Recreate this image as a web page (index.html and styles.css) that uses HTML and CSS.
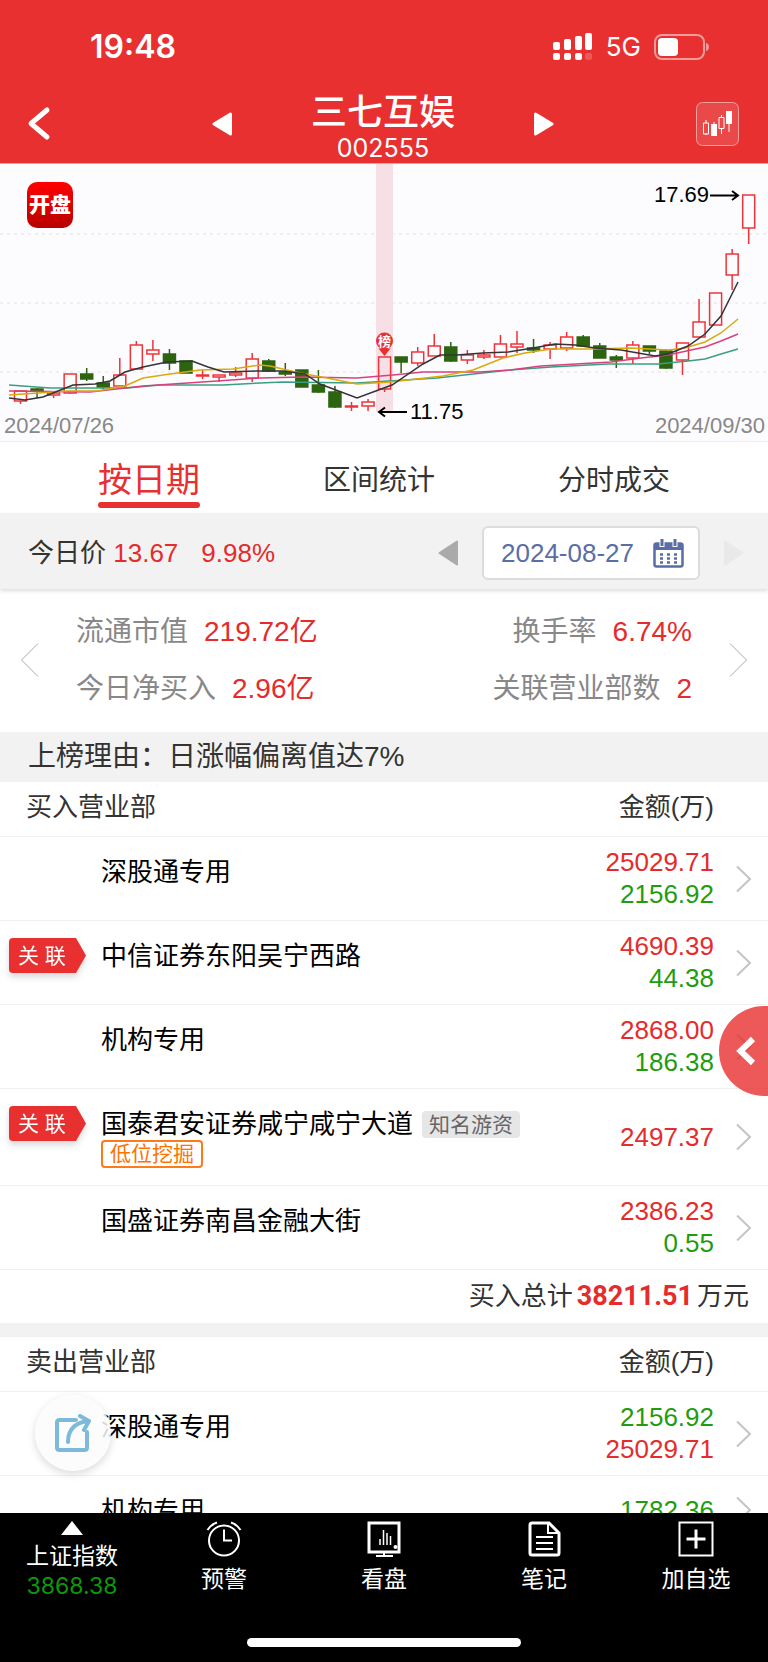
FILE: index.html
```html
<!DOCTYPE html>
<html lang="zh-CN">
<head>
    <meta charset="UTF-8">
    <meta name="viewport" content="width=device-width, initial-scale=1.0">
    <title>三七互娱 002555</title>
    <link rel="stylesheet" href="styles.css">
</head>
<body>
    <header class="header">
        <div class="status-bar">
            <span class="status-time">19:48</span>
            <div class="status-right">
                <svg width="40" height="28" viewBox="0 0 40 28" fill="#fff">
                    <rect x="0" y="9" width="7" height="8" rx="2"/>
                    <rect x="11" y="6" width="7" height="11" rx="2"/>
                    <rect x="22" y="3" width="7" height="14" rx="2"/>
                    <rect x="32" y="0" width="7" height="17" rx="2"/>
                    <rect x="0" y="20" width="7" height="7" rx="2"/>
                    <rect x="11" y="20" width="7" height="7" rx="2"/>
                    <rect x="22" y="20" width="7" height="7" rx="2"/>
                    <rect x="32" y="20" width="7" height="7" rx="2" opacity="0.2"/>
                </svg>
                <span class="status-net">5G</span>
                <svg width="56" height="26" viewBox="0 0 56 26">
                    <rect x="1" y="1" width="49" height="24" rx="7" fill="none" stroke="#f39a9a" stroke-width="2"/>
                    <rect x="4" y="4" width="20" height="18" rx="4" fill="#fff"/>
                    <path d="M52 9c4 1 4 7 0 8z" fill="#f39a9a"/>
                </svg>
            </div>
        </div>
        <nav class="title-bar">
            <button class="icon-btn" aria-label="返回">
                <svg width="24" height="36" viewBox="0 0 24 36"><path d="M20 4L4 17.500L20 31" fill="none" stroke="#fff" stroke-width="5" stroke-linecap="round" stroke-linejoin="round"/></svg>
            </button>
            <div class="stock">
                <button class="icon-btn" aria-label="上一只">
                    <svg width="20" height="24" viewBox="0 0 20 24"><path d="M18.500 2v20L2 12z" fill="#fff" stroke="#fff" stroke-width="3" stroke-linejoin="round"/></svg>
                </button>
                <div class="stock-name">
                    <h1>三七互娱</h1>
                    <p>002555</p>
                </div>
                <button class="icon-btn" aria-label="下一只">
                    <svg width="20" height="24" viewBox="0 0 20 24"><path d="M1.500 2v20L18 12z" fill="#fff" stroke="#fff" stroke-width="3" stroke-linejoin="round"/></svg>
                </button>
            </div>
            <button class="icon-btn" aria-label="K线图">
                <svg width="43" height="44" viewBox="0 0 43 44">
                    <rect x="0.500" y="0.500" width="42" height="43" rx="6" fill="#fff" fill-opacity="0.12" stroke="#f3a0a0"/>
                    <path d="M10 18v3M10 31v2M25.500 13v2M25.500 27v5M18 20v3M33 22v8" stroke="#fff" stroke-width="1"/>
                    <path d="M7.500 21h5v11h-5zM23 15.500h5v11h-5z" fill="none" stroke="#fff"/>
                    <path d="M15 22h6v12h-6zM30 9h6v13h-6z" fill="#fff"/>
                </svg>
            </button>
        </nav>
    </header>

    <main class="content">
        <div class="chart">
            <svg id="kline" viewBox="0 0 768 277">
                <path class="grid-line" d="M0 70H768M0 139H768M0 208H768"/>
                <rect class="cursor-band" x="376" y="0" width="17" height="248"/>
                <g id="candles"></g>
                <g id="averages"></g>
                <path d="M378.500 184.500L384.500 192L390.500 184.500z" fill="#e93030"/>
                <circle cx="384.500" cy="177" r="8.500" fill="#e93030"/>
                <text class="mark-text" x="384.500" y="182" text-anchor="middle">榜</text>
                <path class="arrow" d="M407 248H379M385 243.500L379 248L385 252.500"/>
                <text class="price-text" x="410" y="255">11.75</text>
                <path class="arrow" d="M710 31.500H738M732 27L738 31.500L732 36"/>
                <text class="price-text" x="709" y="38" text-anchor="end">17.69</text>
                <text class="date-text" x="4" y="269">2024/07/26</text>
                <text class="date-text" x="765" y="269" text-anchor="end">2024/09/30</text>
            </svg>
            <span class="app-logo">开盘</span>
        </div>

        <div class="tabs" role="tablist">
            <button class="tab active" role="tab" aria-selected="true">按日期</button>
            <button class="tab" role="tab">区间统计</button>
            <button class="tab" role="tab">分时成交</button>
        </div>

        <div class="price-bar">
            <div class="price">今日价 <span class="red">13.67</span><span class="red change">9.98%</span></div>
            <div class="date-picker">
                <button class="icon-btn" aria-label="前一天">
                    <svg width="20" height="26" viewBox="0 0 20 26"><path d="M19 1.500v23L1.500 13z" fill="#aaa" stroke="#aaa" stroke-width="2" stroke-linejoin="round"/></svg>
                </button>
                <label class="date-box">
                    <input type="text" value="2024-08-27" aria-label="日期" readonly>
                    <svg width="31" height="29" viewBox="0 0 31 29">
                        <rect x="1.500" y="4.500" width="28" height="23" rx="2" fill="#fff" stroke="#5a6da6" stroke-width="2.500"/>
                        <path d="M1 4h29v7H1z" fill="#5a6da6"/>
                        <path d="M9 0v8M22 0v8" stroke="#fff" stroke-width="5"/>
                        <path d="M9 0v7M22 0v7" stroke="#5a6da6" stroke-width="3"/>
                        <path d="M7 15.500h17M7 19.500h17M7 23.500h17" stroke="#5a6da6" stroke-width="2.500" stroke-dasharray="3 4"/>
                    </svg>
                </label>
                <button class="icon-btn" aria-label="后一天" disabled>
                    <svg width="20" height="26" viewBox="0 0 20 26"><path d="M1 1.500v23L18.500 13z" fill="#e9e9e9" stroke="#e9e9e9" stroke-width="2" stroke-linejoin="round"/></svg>
                </button>
            </div>
        </div>

        <section class="summary">
            <button class="icon-btn" aria-label="上一页">
                <svg width="18" height="34" viewBox="0 0 18 34"><path d="M17 0.500L0.500 17L17 33.500" fill="none" stroke="#aaa"/></svg>
            </button>
            <div class="summary-cols">
                <dl>
                    <div><dt>流通市值</dt><dd>219.72亿</dd></div>
                    <div><dt>今日净买入</dt><dd>2.96亿</dd></div>
                </dl>
                <dl class="right">
                    <div><dt>换手率</dt><dd>6.74%</dd></div>
                    <div><dt>关联营业部数</dt><dd>2</dd></div>
                </dl>
            </div>
            <button class="icon-btn" aria-label="下一页">
                <svg width="18" height="34" viewBox="0 0 18 34"><path d="M1 0.500L17.500 17L1 33.500" fill="none" stroke="#aaa"/></svg>
            </button>
        </section>

        <p class="reason">上榜理由：日涨幅偏离值达7%</p>

        <table class="branches">
            <thead>
                <tr><th class="side" colspan="2">买入营业部</th><th class="amount">金额(万)</th><th class="more"></th></tr>
            </thead>
            <tbody>
                <tr>
                    <td class="mark"></td>
                    <td class="name"><div class="name-line">深股通专用</div></td>
                    <td class="amount"><div class="red">25029.71</div><div class="green">2156.92</div></td>
                    <td class="more"><a href="#" aria-label="详情"><svg width="16" height="28" viewBox="0 0 16 28"><path d="M1 1.500L14 14L1 26.500"/></svg></a></td>
                </tr>
                <tr>
                    <td class="mark"><div class="badge"><span>关 联</span></div></td>
                    <td class="name"><div class="name-line">中信证券东阳吴宁西路</div></td>
                    <td class="amount"><div class="red">4690.39</div><div class="green">44.38</div></td>
                    <td class="more"><a href="#" aria-label="详情"><svg width="16" height="28" viewBox="0 0 16 28"><path d="M1 1.500L14 14L1 26.500"/></svg></a></td>
                </tr>
                <tr>
                    <td class="mark"></td>
                    <td class="name"><div class="name-line">机构专用</div></td>
                    <td class="amount"><div class="red">2868.00</div><div class="green">186.38</div></td>
                    <td class="more"><a href="#" aria-label="详情"><svg width="16" height="28" viewBox="0 0 16 28"><path d="M1 1.500L14 14L1 26.500"/></svg></a></td>
                </tr>
                <tr>
                    <td class="mark"><div class="badge"><span>关 联</span></div></td>
                    <td class="name">
                        <div class="name-line">国泰君安证券咸宁咸宁大道<span class="tag">知名游资</span></div>
                        <div class="tag tag-orange">低位挖掘</div>
                    </td>
                    <td class="amount"><div class="red">2497.37</div></td>
                    <td class="more"><a href="#" aria-label="详情"><svg width="16" height="28" viewBox="0 0 16 28"><path d="M1 1.500L14 14L1 26.500"/></svg></a></td>
                </tr>
                <tr>
                    <td class="mark"></td>
                    <td class="name"><div class="name-line">国盛证券南昌金融大街</div></td>
                    <td class="amount"><div class="red">2386.23</div><div class="green">0.55</div></td>
                    <td class="more"><a href="#" aria-label="详情"><svg width="16" height="28" viewBox="0 0 16 28"><path d="M1 1.500L14 14L1 26.500"/></svg></a></td>
                </tr>
            </tbody>
        </table>

        <div class="total">买入总计<strong>38211.51</strong>万元</div>

        <table class="branches">
            <thead>
                <tr><th class="side" colspan="2">卖出营业部</th><th class="amount">金额(万)</th><th class="more"></th></tr>
            </thead>
            <tbody>
                <tr>
                    <td class="mark"></td>
                    <td class="name"><div class="name-line">深股通专用</div></td>
                    <td class="amount"><div class="green">2156.92</div><div class="red">25029.71</div></td>
                    <td class="more"><a href="#" aria-label="详情"><svg width="16" height="28" viewBox="0 0 16 28"><path d="M1 1.500L14 14L1 26.500"/></svg></a></td>
                </tr>
                <tr>
                    <td class="mark"></td>
                    <td class="name"><div class="name-line">机构专用</div></td>
                    <td class="amount"><div class="green">1782.36</div></td>
                    <td class="more"><a href="#" aria-label="详情"><svg width="16" height="28" viewBox="0 0 16 28"><path d="M1 1.500L14 14L1 26.500"/></svg></a></td>
                </tr>
            </tbody>
        </table>
    </main>

    <button class="side-btn" aria-label="展开">
        <svg width="20" height="30" viewBox="0 0 20 30"><path d="M17 3L4.500 15L17 27" fill="none" stroke="#fff" stroke-width="6"/></svg>
    </button>
    <button class="share-btn" aria-label="分享">
        <svg width="36" height="38" viewBox="0 0 36 38" fill="none" stroke="#7cbadb" stroke-width="4">
            <path d="M21 6H4.500Q2 6 2 8.500V33.500Q2 36 4.500 36H29.500Q32 36 32 33.500V18" stroke-linecap="round"/>
            <path d="M13 28C13 17 18 9 33 7M25 2L34 7L29 16" stroke-linecap="round" stroke-linejoin="round"/>
        </svg>
    </button>

    <footer class="footer">
        <nav class="bottom-nav">
            <a class="nav-item index" href="#">
                <svg width="22" height="14" viewBox="0 0 22 14"><path d="M11 0L22 14H0z" fill="#fff"/></svg>
                <span>上证指数</span>
                <span class="index-value">3868.38</span>
            </a>
            <a class="nav-item" href="#">
                <svg width="36" height="36" viewBox="0 0 36 36" fill="none" stroke="#fff" stroke-width="2">
                    <circle cx="18" cy="19.500" r="15"/>
                    <path d="M18 8.500V19.500H26"/>
                    <path d="M1.500 9Q5 3.500 11 1.500M34.500 9Q31 3.500 25 1.500"/>
                </svg>
                <span>预警</span>
            </a>
            <a class="nav-item" href="#">
                <svg width="36" height="36" viewBox="0 0 36 36" fill="none" stroke="#fff" stroke-width="2">
                    <path d="M3 2H33V31H3z" stroke-width="3"/>
                    <path d="M18 31V35M10 35H27"/>
                    <path d="M14 24V18M17.500 24V9M21 24V12M24.500 24V15" stroke-width="1.500"/>
                    <circle cx="29.500" cy="26" r="1"/>
                </svg>
                <span>看盘</span>
            </a>
            <a class="nav-item" href="#">
                <svg width="36" height="36" viewBox="0 0 36 36" fill="none" stroke="#fff" stroke-width="2">
                    <path d="M6 2H23L33 12V32Q33 34 31 34H6Q4 34 4 32V4Q4 2 6 2z" stroke-width="3"/>
                    <path d="M22 3V12H32"/>
                    <path d="M10 16H27M10 22H27M10 28H27"/>
                </svg>
                <span>笔记</span>
            </a>
            <a class="nav-item" href="#">
                <svg width="36" height="36" viewBox="0 0 36 36" fill="none" stroke="#fff">
                    <path d="M1.500 1.500H34.500V34.500H1.500z" stroke-width="2"/>
                    <path d="M18 8.500V27.500M8.500 18H27.500" stroke-width="3"/>
                </svg>
                <span>加自选</span>
            </a>
        </nav>
        <div class="home-bar"></div>
    </footer>

    <script src="chart.js"></script>
</body>
</html>
```
FILE: styles.css
```css
* {
    margin: 0;
    padding: 0;
    box-sizing: border-box;
}

body {
    display: flex;
    flex-direction: column;
    height: 100vh;
    font-family: "Liberation Sans", "Noto Sans CJK SC", sans-serif;
    font-size: 26px;
    color: #333;
    background: #fff;
}

button {
    border: none;
    background: none;
    font-family: inherit;
    cursor: pointer;
}

a {
    color: inherit;
    text-decoration: none;
}

svg {
    display: block;
}

.icon-btn {
    flex-shrink: 0;
}

.red {
    color: #e52b2b;
}

.green {
    color: #1f9c0f;
}

/* 顶部 */
.header {
    flex-shrink: 0;
    background: #e83030;
    color: #fff;
    border-bottom: 1px solid #f3a0a0;
}

.status-bar {
    display: flex;
    justify-content: space-between;
    align-items: center;
    height: 93px;
    padding: 0 58px 0 90px;
    font-family: Inter, sans-serif;
}

.status-time {
    font-size: 32px;
    font-weight: 600;
}

.status-right {
    display: flex;
    align-items: center;
    gap: 13px;
}

.status-net {
    font-size: 26px;
}

.title-bar {
    display: flex;
    justify-content: space-between;
    padding: 0 29px 0 27px;
}

.title-bar .icon-btn {
    height: 62px;
}

.title-bar > .icon-btn {
    width: 43px;
}

.stock {
    display: flex;
    gap: 79px;
}

.stock-name {
    text-align: center;
}

.stock-name h1 {
    font-size: 36px;
    line-height: 40px;
    font-weight: 500;
}

.stock-name p {
    font-family: Inter, sans-serif;
    font-size: 25px;
    line-height: 30px;
}

/* 主体 */
.content {
    flex: 1;
    min-height: 0;
    overflow-y: auto;
    scrollbar-width: none;
}

.chart {
    position: relative;
    background: #fcfcff;
    border-bottom: 1px solid #eee;
}

.chart > svg {
    width: 100%;
}

.app-logo {
    position: absolute;
    left: 27px;
    top: 18px;
    width: 46px;
    height: 46px;
    border-radius: 10px;
    background: linear-gradient(#ff0000, #b80000);
    color: #fff;
    font-size: 21px;
    font-weight: 900;
    line-height: 46px;
    text-align: center;
}

.grid-line {
    stroke: #e2e2e6;
    stroke-dasharray: 3 4;
}

.cursor-band {
    fill: #f6dfe5;
}

.candle-up {
    fill: none;
    stroke: #ee3338;
    stroke-width: 1.500;
}

.candle-down {
    fill: #2c6410;
    stroke: #2c6410;
    stroke-width: 1.500;
}

.average {
    fill: none;
    stroke-width: 1.500;
}

.arrow {
    fill: none;
    stroke: #000;
    stroke-width: 2;
}

.mark-text {
    font-size: 13px;
    font-weight: 700;
    fill: #fff;
}

.price-text {
    font-size: 22px;
    fill: #000;
}

.date-text {
    font-size: 22px;
    fill: #888;
}

.tabs {
    display: flex;
    justify-content: space-between;
    padding: 0 98px;
    height: 71px;
}

.tab {
    font-size: 28px;
    color: #333;
}

.tab.active {
    position: relative;
    font-size: 34px;
    color: #e83030;
}

.tab.active::after {
    content: "";
    position: absolute;
    left: 0;
    right: 0;
    bottom: 5px;
    height: 6px;
    border-radius: 3px;
    background: #e83030;
}

.price-bar {
    display: flex;
    justify-content: space-between;
    padding: 13px 24px 9px 28px;
    background: #f2f2f2;
    box-shadow: 0 2px 4px #ddd;
    line-height: 54px;
}

.change {
    margin-left: 23px;
}

.date-picker {
    display: flex;
    align-items: center;
    gap: 24px;
}

.date-box {
    display: flex;
    align-items: center;
    gap: 17px;
    height: 54px;
    padding: 0 14px 0 17px;
    border: 2px solid #dcdcdc;
    border-radius: 6px;
    background: #fff;
}

.date-box input {
    width: 135px;
    border: none;
    outline: none;
    background: none;
    font-family: inherit;
    font-size: 26px;
    color: #5a6da6;
}

.summary {
    display: flex;
    align-items: center;
    gap: 37px;
    padding: 14px 21px 15px;
}

.summary-cols {
    flex: 1;
    display: flex;
    justify-content: space-between;
    font-size: 28px;
    line-height: 57px;
}

.summary-cols dl div {
    display: flex;
    gap: 16px;
}

.summary-cols .right div {
    justify-content: flex-end;
}

.summary-cols dt {
    color: #888;
}

.summary-cols dd {
    color: #e52b2b;
}

.reason {
    padding: 0 28px;
    background: #f2f2f2;
    font-size: 28px;
    line-height: 50px;
}

/* 营业部列表 */
.branches {
    width: 100%;
    border-spacing: 0;
}

.branches th {
    height: 55px;
    padding-bottom: 4px;
    border-bottom: 1px solid #f0f0f0;
    font-weight: 400;
    line-height: 50px;
}

.branches td {
    border-bottom: 1px solid #f0f0f0;
}

.branches .side {
    padding-left: 26px;
    text-align: left;
}

.branches .amount {
    text-align: right;
}

.branches .mark {
    width: 101px;
    padding: 17px 0 0 9px;
    vertical-align: top;
}

.branches .name {
    padding: 19px 0 17px;
    vertical-align: top;
    color: #000;
}

.branches td.amount {
    padding: 9px 0 10px;
    line-height: 32px;
}

.branches .more {
    width: 54px;
    padding-left: 22px;
}

.branches .more svg {
    fill: none;
    stroke: #c4c4c4;
    stroke-width: 2;
}

.name-line {
    display: flex;
    align-items: center;
    gap: 9px;
    line-height: 32px;
}

.tag {
    width: fit-content;
    padding: 0 7px;
    border-radius: 4px;
    background: #e6e6e6;
    color: #666;
    font-size: 21px;
    line-height: 27px;
}

.tag-orange {
    border: 2px solid #ff7a1a;
    background: #fff;
    color: #ff7200;
    line-height: 24px;
}

.badge {
    filter: drop-shadow(0 4px 3px rgba(0, 0, 0, 0.15));
}

.badge span {
    display: block;
    width: 77px;
    padding-left: 9px;
    border-radius: 4px;
    background: #e83030;
    clip-path: polygon(0 0, 67px 0, 100% 50%, 67px 100%, 0 100%);
    color: #fff;
    font-size: 21px;
    line-height: 35px;
}

.total {
    display: flex;
    justify-content: flex-end;
    gap: 4px;
    padding-right: 19px;
    border-bottom: 14px solid #f2f2f2;
    line-height: 53px;
}

.total strong {
    font-family: Roboto, sans-serif;
    font-size: 27px;
    color: #e52b2b;
}

/* 悬浮按钮 */
.side-btn {
    position: fixed;
    right: 0;
    top: 1006px;
    width: 49px;
    height: 90px;
    padding-left: 17px;
    border-radius: 45px 0 0 45px;
    background: rgba(232, 48, 48, 0.8);
}

.share-btn {
    position: fixed;
    left: 35px;
    bottom: 191px;
    display: flex;
    justify-content: center;
    align-items: center;
    width: 76px;
    height: 76px;
    border-radius: 50%;
    background: rgba(251, 251, 251, 0.85);
    box-shadow: 0 3px 8px rgba(0, 0, 0, 0.15);
}

/* 底部导航 */
.footer {
    flex-shrink: 0;
    height: 149px;
    padding-top: 8px;
    background: #000;
    color: #fff;
    font-size: 23px;
}

.bottom-nav {
    display: flex;
    height: 117px;
}

.nav-item {
    flex: 10;
    display: flex;
    flex-direction: column;
    align-items: center;
    gap: 7px;
    line-height: 30px;
}

.nav-item:first-child,
.nav-item:last-child {
    flex: 9;
}

.nav-item.index {
    gap: 0;
}

.index svg {
    margin-bottom: 6px;
}

.index-value {
    font-family: Inter, sans-serif;
    color: #0b990b;
}

.home-bar {
    width: 274px;
    height: 9px;
    margin: 0 auto;
    border-radius: 5px;
    background: #fff;
}
```
FILE: chart.js
```js
// [涨跌, 最高, 实体上沿, 实体下沿, 最低]
const candles = [
    [1, 227, 227, 237, 240], [0, 224, 225, 227, 234], [1, 227, 229, 231, 234],
    [1, 210, 210, 229, 230], [0, 204, 210, 215, 217], [0, 212, 219, 223, 225],
    [1, 194, 211, 222, 222], [1, 177, 181, 205, 205], [1, 176, 186, 190, 197],
    [0, 185, 190, 199, 206], [0, 197, 197, 209, 209], [1, 206, 211, 212, 215],
    [1, 211, 211, 213, 218], [1, 203, 209, 211, 213], [1, 189, 195, 214, 218],
    [0, 195, 197, 207, 208], [0, 199, 208, 210, 212], [0, 206, 206, 223, 223],
    [0, 206, 221, 228, 229], [0, 222, 228, 243, 244], [1, 238, 242, 243, 247],
    [1, 235, 238, 242, 247], [1, 193, 193, 225, 228], [0, 193, 193, 198, 209],
    [1, 183, 188, 199, 202], [1, 170, 182, 192, 192], [0, 178, 183, 197, 198],
    [1, 186, 191, 196, 200], [1, 186, 191, 193, 195], [1, 171, 180, 193, 193],
    [1, 167, 180, 183, 189], [0, 175, 184, 186, 189], [1, 178, 181, 185, 195],
    [1, 168, 173, 184, 187], [0, 171, 173, 182, 182], [0, 179, 182, 194, 194],
    [0, 191, 193, 196, 204], [1, 177, 181, 194, 200], [0, 182, 182, 187, 190],
    [0, 185, 187, 204, 205], [1, 179, 179, 196, 211], [1, 135, 158, 173, 173],
    [1, 129, 129, 161, 161], [1, 85, 90, 111, 126], [1, 31, 31, 64, 80]
];

// 均线
const averages = {
    '#3a9e80': '9,221 50,224 127,224 160,221 223,221 260,219 283,218 357,219 437,214 510,206 551,203 608,200 658,200 688,197 705,195 721,190 738,185',
    '#d8417e': '9,227 90,228 143,222 217,217 260,214 303,213 357,214 393,211 423,208 480,208 510,206 541,202 611,198 641,194 668,191 705,183 721,177 738,170',
    '#d9a90d': '9,231 67,227 97,227 125,222 143,214 170,210 200,206 233,205 260,201 270,202 300,209 327,214 357,220 390,218 443,212 473,206 503,194 525,189 551,185 591,185 631,184 668,186 685,184 705,178 721,169 738,155',
    '#333338': '9,234 25,236 43,233 73,221 95,220 110,217 125,208 143,203 167,198 192,197 208,203 224,208 257,207 283,207 305,210 320,220 357,234 392,221 423,200 440,191 457,191 483,189 508,188 533,184 555,180 575,181 595,184 621,186 655,192 668,190 688,182 705,170 721,152 738,118'
};

document.getElementById('candles').innerHTML = candles.map(([up, high, top, bottom, low], i) => {
    const x = 20.5 + i * 16.55;
    return `<path class="${up ? 'candle-up' : 'candle-down'}" d="M${x} ${high}V${top}M${x} ${bottom}V${low}M${x - 6} ${top}h12V${bottom}h-12z"/>`;
}).join('');

document.getElementById('averages').innerHTML = Object.entries(averages).map(([color, points]) =>
    `<polyline class="average" stroke="${color}" points="${points}"/>`
).join('');
```
